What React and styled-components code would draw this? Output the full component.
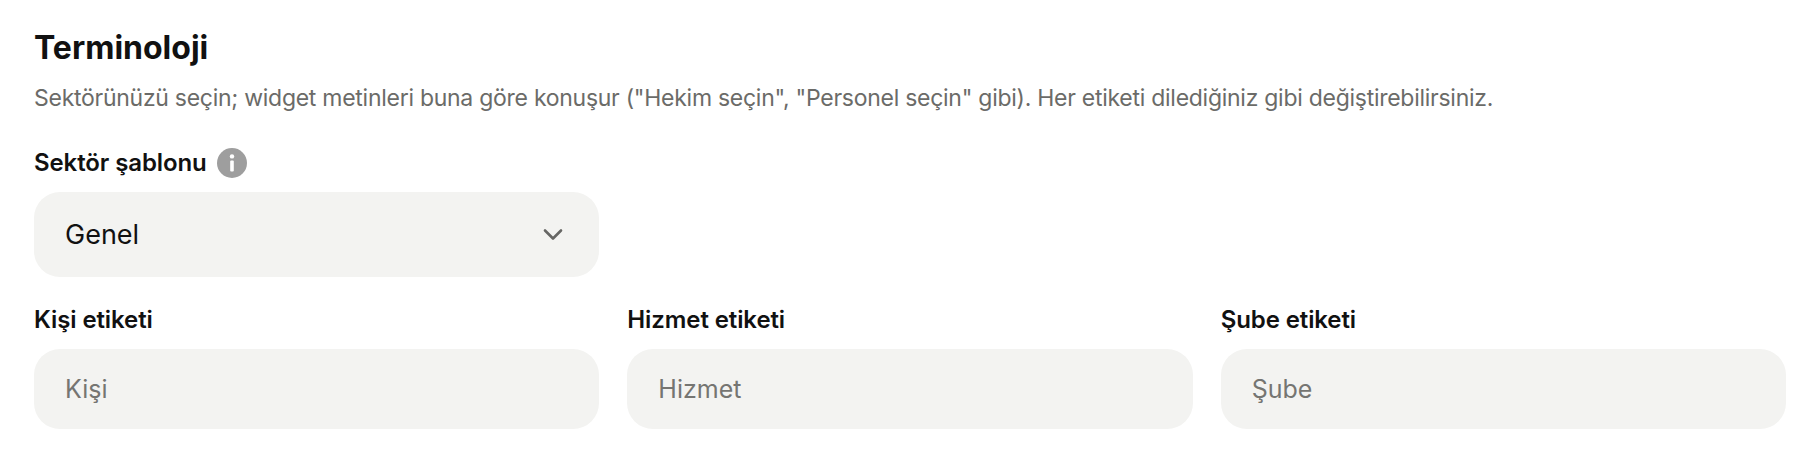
import React from "react";
import styled, { createGlobalStyle } from "styled-components";

const FONT = `"Inter", "Noto Sans", sans-serif`;

const GlobalStyle = createGlobalStyle`
  html, body {
    margin: 0;
    background: #ffffff;
  }
  * {
    box-sizing: border-box;
  }
`;

const Section = styled.section`
  display: flex;
  flex-direction: column;
  width: 1820px;
  height: 468px;
  padding: 28px 34px 0;
  font-family: ${FONT};
  overflow: hidden;
`;

const Title = styled.h2`
  margin: 0;
  font-size: 32px;
  line-height: 40px;
  font-weight: 700;
  color: #111111;
`;

const Description = styled.p`
  margin: 13px 0 0;
  font-size: 23px;
  line-height: 34px;
  font-weight: 400;
  letter-spacing: -0.27px;
  color: #6b6b68;
`;

const LabelRow = styled.div`
  display: flex;
  align-items: center;
  gap: 10px;
  height: 34px;
  margin-top: ${(p) => p.$top || 0}px;
  margin-bottom: 12px;
`;

const Label = styled.label`
  font-size: 24px;
  line-height: 34px;
  font-weight: 600;
  letter-spacing: -0.1px;
  color: #111111;
`;

const Field = styled.div`
  display: flex;
  flex-direction: column;
  min-width: 0;
`;

const SelectBox = styled.div`
  display: flex;
  align-items: center;
  justify-content: space-between;
  width: 565px;
  height: 85px;
  padding: 0 36px 0 31px;
  border-radius: 26px;
  background: #f3f3f1;
  font-size: 27px;
  color: #111111;
`;

const Columns = styled.div`
  display: grid;
  grid-template-columns: repeat(3, 1fr);
  gap: 28px;
  margin-top: 26px;
`;

const TextInput = styled.input`
  width: 100%;
  height: 80px;
  padding: 0 31px;
  border: 0;
  border-radius: 26px;
  background: #f3f3f1;
  font-family: ${FONT};
  font-size: 25px;
  color: #111111;
  outline: none;

  &::placeholder {
    color: #757572;
    opacity: 1;
  }
`;

const InfoIcon = () => (
  <svg width="30" height="30" viewBox="0 0 30 30" aria-hidden="true">
    <circle cx="15" cy="15" r="15" fill="#9e9e9e" />
    <circle cx="15" cy="8.4" r="2.2" fill="#ffffff" />
    <rect x="13.2" y="12.4" width="3.6" height="11" rx="1" fill="#ffffff" />
  </svg>
);

const ChevronIcon = () => (
  <svg width="20" height="13" viewBox="0 0 20 13" aria-hidden="true">
    <path
      d="M2 2.5l8 8 8-8"
      fill="none"
      stroke="#666664"
      strokeWidth="2.6"
      strokeLinecap="round"
      strokeLinejoin="round"
    />
  </svg>
);

const LABELS = [
  { label: "Kişi etiketi", placeholder: "Kişi" },
  { label: "Hizmet etiketi", placeholder: "Hizmet" },
  { label: "Şube etiketi", placeholder: "Şube" },
];

export default function App() {
  return (
    <Section>
      <GlobalStyle />
      <Title>Terminoloji</Title>
      <Description>
        Sektörünüzü seçin; widget metinleri buna göre konuşur ("Hekim seçin", "Personel seçin"
        gibi). Her etiketi dilediğiniz gibi değiştirebilirsiniz.
      </Description>
      <LabelRow $top={31}>
        <Label>Sektör şablonu</Label>
        <InfoIcon />
      </LabelRow>
      <SelectBox>
        Genel
        <ChevronIcon />
      </SelectBox>
      <Columns>
        {LABELS.map((item) => (
          <Field key={item.label}>
            <LabelRow>
              <Label>{item.label}</Label>
            </LabelRow>
            <TextInput placeholder={item.placeholder} />
          </Field>
        ))}
      </Columns>
    </Section>
  );
}
